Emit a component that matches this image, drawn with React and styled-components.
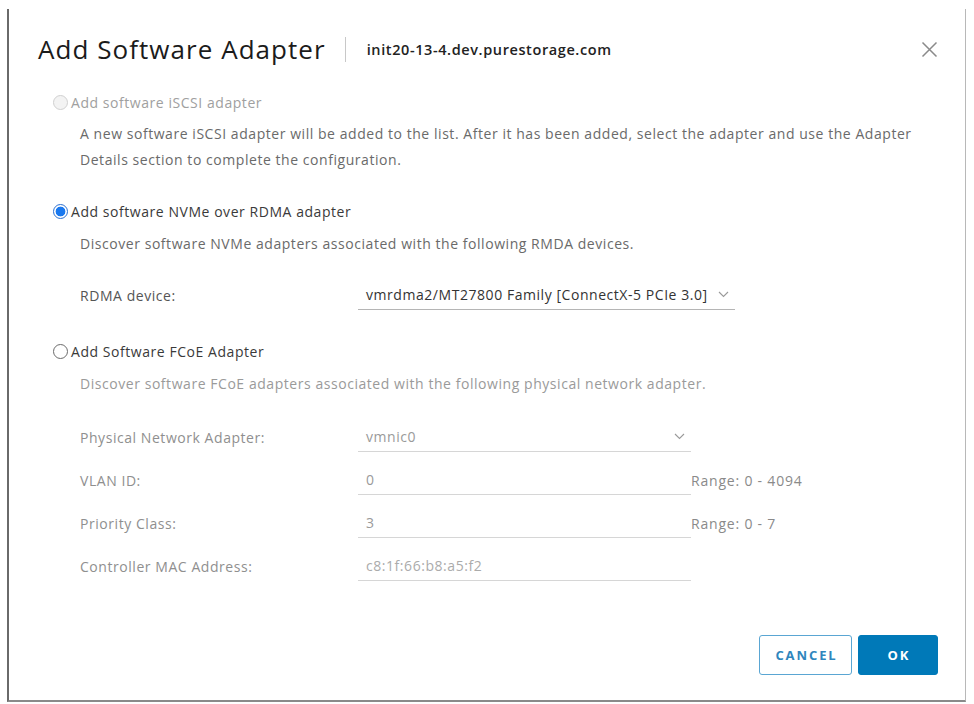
import React from "react";
import styled, { createGlobalStyle } from "styled-components";

const Global = createGlobalStyle`
  html, body { margin: 0; padding: 0; background: #fff; }
  body { font-family: "Open Sans", "Noto Sans", sans-serif; }
  * { box-sizing: border-box; }
`;

const Frame = styled.div`
  margin: 9px 0 0 7px;
  width: 959px;
  height: 693px;
  border-left: 2px solid #6a6a6a;
  border-right: 1px solid #b8b8b8;
  border-bottom: 2px solid #8a8a8a;
  display: flex;
  flex-direction: column;
`;

const Header = styled.div`
  margin-top: 22px;
  height: 36px;
  display: flex;
  align-items: center;
  padding-left: 29px;
  padding-right: 27px;
`;

const Title = styled.h1`
  margin: 0;
  font-size: 26px;
  font-weight: 400;
  color: #1b1b1b;
  letter-spacing: 1.05px;
`;

const Divider = styled.span`
  width: 1px;
  height: 25px;
  background: #c8c8c8;
  margin: 0 21px 0 19px;
`;

const Host = styled.span`
  font-size: 14.5px;
  font-weight: 600;
  color: #222;
  letter-spacing: 0.6px;
  flex: 1;
`;

const Close = styled.button`
  border: 0;
  background: none;
  padding: 0;
  width: 18px;
  height: 18px;
  display: flex;
  align-items: center;
  justify-content: center;
`;

const Body = styled.div`
  display: flex;
  flex-direction: column;
  padding-left: 44px;
`;

const OptionRow = styled.label`
  display: flex;
  align-items: center;
  height: 26px;
  margin-top: ${(p) => p.$mt}px;
  font-size: 14px;
  letter-spacing: 0.55px;
  color: ${(p) => (p.$disabled ? "#a0a0a0" : "#3a3a3a")};
  gap: 3px;
`;

const Radio = styled.span`
  width: 15px;
  height: 15px;
  border-radius: 50%;
  flex: none;
  border: 1px solid
    ${(p) => (p.$checked ? "#2a6fd0" : p.$disabled ? "#d0d0d0" : "#6b6b6b")};
  background: ${(p) =>
    p.$checked
      ? "radial-gradient(circle, #1978ef 0 4.6px, #fff 5.2px)"
      : p.$disabled
      ? "#f3f3f3"
      : "#fff"};
`;

const Desc = styled.div`
  margin-top: ${(p) => p.$mt}px;
  margin-left: 27px;
  font-size: 14px;
  line-height: 26px;
  letter-spacing: 0.55px;
  color: ${(p) => (p.$muted ? "#9a9a9a" : "#6a6a6a")};
  max-width: 835px;
`;

const FieldGrid = styled.div`
  margin-top: ${(p) => p.$mt}px;
  margin-left: 27px;
  display: grid;
  grid-template-columns: 278px auto 1fr;
  row-gap: 13px;
`;

const FieldLabel = styled.div`
  height: 30px;
  display: flex;
  align-items: center;
  font-size: 14px;
  letter-spacing: 0.55px;
  color: ${(p) => (p.$muted ? "#8f8f8f" : "#555")};
`;

const Field = styled.div`
  height: 30px;
  width: ${(p) => p.$w}px;
  border-bottom: 1px solid ${(p) => (p.$muted ? "#d6d6d6" : "#b5b5b5")};
  display: flex;
  align-items: center;
  justify-content: space-between;
  padding: 0 6px 0 8px;
  font-size: 14px;
  letter-spacing: 0.55px;
  color: ${(p) => p.$color || "#333"};
`;

const Hint = styled.div`
  height: 30px;
  display: flex;
  align-items: center;
  font-size: 14px;
  letter-spacing: 0.8px;
  color: #8a8a8a;
`;

const Footer = styled.div`
  margin-top: auto;
  margin-bottom: 25px;
  display: flex;
  justify-content: flex-end;
  gap: 6px;
  padding-right: 27px;
`;

const Button = styled.button`
  height: 40px;
  width: ${(p) => p.$w}px;
  border-radius: 3px;
  font-family: "Open Sans", "Noto Sans", sans-serif;
  font-size: 13px;
  font-weight: 700;
  letter-spacing: 1.9px;
  padding: 0 0 0 2px;
  border: 1px solid ${(p) => (p.$primary ? "#0079b8" : "#5aa6d3")};
  background: ${(p) => (p.$primary ? "#0079b8" : "#fff")};
  color: ${(p) => (p.$primary ? "#fff" : "#2f86bd")};
`;

const Chevron = ({ color = "#9a9a9a" }) => (
  <svg width="11" height="7" viewBox="0 0 11 7">
    <path d="M1 1 L5.5 5.5 L10 1" fill="none" stroke={color} strokeWidth="1.1" />
  </svg>
);

export default function App() {
  return (
    <>
      <Global />
      <Frame>
        <Header>
          <Title>Add Software Adapter</Title>
          <Divider />
          <Host>init20-13-4.dev.purestorage.com</Host>
          <Close aria-label="close">
            <svg width="17" height="17" viewBox="0 0 17 17">
              <path d="M1.5 1.5 L15.5 15.5 M15.5 1.5 L1.5 15.5" stroke="#8a8a8a" strokeWidth="1.5" />
            </svg>
          </Close>
        </Header>
        <Body>
          <OptionRow $mt={22} $disabled>
            <Radio $disabled />
            Add software iSCSI adapter
          </OptionRow>
          <Desc $mt={6}>
            A new software iSCSI adapter will be added to the list. After it has been added, select the adapter and use the Adapter Details section to complete the configuration.
          </Desc>
          <OptionRow $mt={25}>
            <Radio $checked />
            Add software NVMe over RDMA adapter
          </OptionRow>
          <Desc $mt={7}>
            Discover software NVMe adapters associated with the following RMDA devices.
          </Desc>
          <FieldGrid $mt={23}>
            <FieldLabel>RDMA device:</FieldLabel>
            <Field $w={377}>
              vmrdma2/MT27800 Family [ConnectX-5 PCIe 3.0]
              <Chevron />
            </Field>
            <span />
          </FieldGrid>
          <OptionRow $mt={28}>
            <Radio />
            Add Software FCoE Adapter
          </OptionRow>
          <Desc $mt={7} $muted>
            Discover software FCoE adapters associated with the following physical network adapter.
          </Desc>
          <FieldGrid $mt={25}>
            <FieldLabel $muted>Physical Network Adapter:</FieldLabel>
            <Field $w={333} $muted $color="#9a9a9a">
              vmnic0
              <Chevron />
            </Field>
            <span />
            <FieldLabel $muted>VLAN ID:</FieldLabel>
            <Field $w={333} $muted $color="#9a9a9a">0</Field>
            <Hint>Range: 0 - 4094</Hint>
            <FieldLabel $muted>Priority Class:</FieldLabel>
            <Field $w={333} $muted $color="#9a9a9a">3</Field>
            <Hint>Range: 0 - 7</Hint>
            <FieldLabel $muted>Controller MAC Address:</FieldLabel>
            <Field $w={333} $muted $color="#ababab">c8:1f:66:b8:a5:f2</Field>
            <span />
          </FieldGrid>
        </Body>
        <Footer>
          <Button $w={93}>CANCEL</Button>
          <Button $w={80} $primary>OK</Button>
        </Footer>
      </Frame>
    </>
  );
}
